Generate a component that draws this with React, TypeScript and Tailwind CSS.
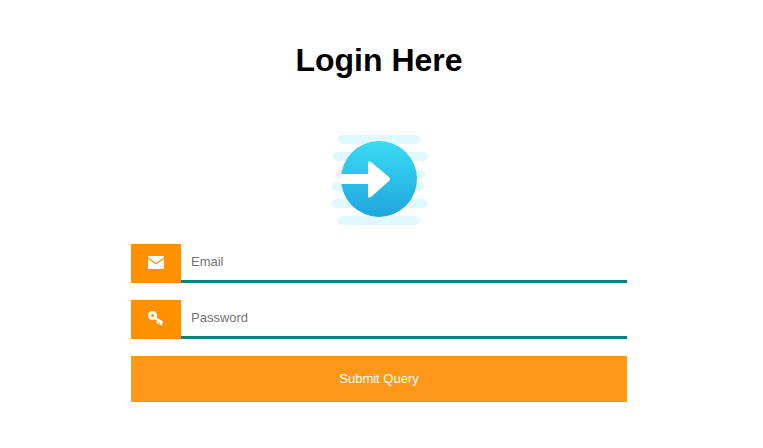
function LoginIcon() {
  const bars = [
    [338, 135, 82],
    [333, 152, 95],
    [336, 170, 89],
    [332, 182, 92],
    [332, 199, 95],
    [338, 216, 82],
  ];
  return (
    <svg width="100" height="92" viewBox="329 134 100 92" className="block">
      <defs>
        <linearGradient id="disc" x1="0" y1="0" x2="0" y2="1">
          <stop offset="0" stopColor="#3bdcf6" />
          <stop offset="1" stopColor="#1ea5dd" />
        </linearGradient>
      </defs>
      {bars.map(([x, y, w]) => (
        <rect key={y} x={x} y={y} width={w} height={9} rx={4.5} fill="#e0f9ff" />
      ))}
      <circle cx="379" cy="179" r="38" fill="url(#disc)" />
      <path
        d="M341 174H368V163Q368 160 371 162L389 177Q391 179 389 181L371 197Q368 199 368 196V184H341Q340.500 179 341 174Z"
        fill="#fff"
      />
    </svg>
  );
}

function MailIcon() {
  return (
    <svg width="16" height="13" viewBox="0 0 16 13" fill="#fff" className="block -mt-[2px]">
      <path d="M0.500 0H15.500Q16 0 16 .5V1.500L8 7 0 1.500V.5Q0 0 .5 0Z" />
      <path d="M0 3L8 8.500 16 3V12Q16 13 15 13H1Q0 13 0 12Z" />
    </svg>
  );
}

function KeyIcon() {
  return (
    <svg width="16" height="15" viewBox="0 0 16 15" className="block -mt-[2px]">
      <circle cx="4.500" cy="4.500" r="3" fill="none" stroke="#fff" strokeWidth="3" />
      <path d="M7 7L14.500 11.500M10.500 9L9.500 12.500M13.500 11L12.500 14" fill="none" stroke="#fff" strokeWidth="2.600" />
    </svg>
  );
}

function Field({ label, type, icon }: { label: string; type: string; icon: React.ReactNode }) {
  return (
    <div className="flex h-[39px]">
      <div className="w-[50px] bg-[#ff9000] flex items-center justify-center">{icon}</div>
      <input
        type={type}
        placeholder={label}
        className="flex-1 min-w-0 px-[10px] pb-[1px] border-b-[3px] border-[#0f8080] text-[13px] text-gray-700 placeholder:text-[#757575] outline-none"
      />
    </div>
  );
}

export default function App() {
  return (
    <div className="bg-white min-h-[448px] pt-[42px] font-['Liberation_Sans',Arial,sans-serif]">
      <div className="w-[496px] ml-[131px]">
        <h1 className="text-[32px] leading-[37px] font-bold text-black text-center">Login Here</h1>
        <div className="flex justify-center mt-[55px] mb-[18px]">
          <LoginIcon />
        </div>
        <form className="flex flex-col gap-[17px]" onSubmit={(e) => e.preventDefault()}>
          <Field label="Email" type="email" icon={<MailIcon />} />
          <Field label="Password" type="password" icon={<KeyIcon />} />
          <button type="submit" className="h-[46px] bg-[#ff9819] text-white text-[13px]">
            Submit Query
          </button>
        </form>
      </div>
    </div>
  );
}
